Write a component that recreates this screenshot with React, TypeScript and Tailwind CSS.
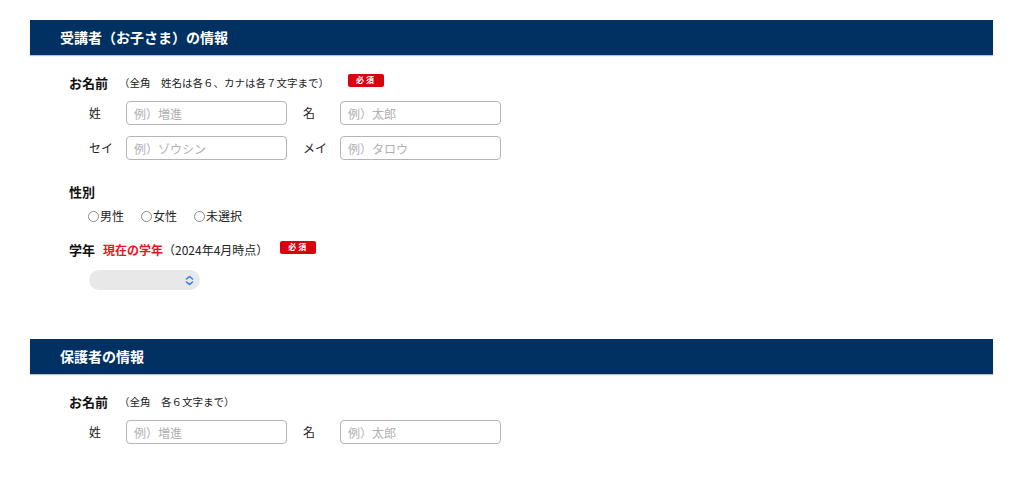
import React from "react";

const font = { fontFamily: '"Noto Sans CJK JP", "Noto Sans", sans-serif' };

function Required() {
  return (
    <span className="inline-flex h-[13px] w-[36px] -translate-y-[3px] items-center justify-center rounded-[2px] bg-[#d9000f] text-[8px] font-bold leading-none tracking-[2px] text-white">
      必須
    </span>
  );
}

function SectionHeader({ title }: { title: string }) {
  return (
    <h2 className="flex h-[35px] items-center bg-[#003162] pl-[30px] text-[14px] font-bold text-white shadow-[0_1px_1px_rgba(0,0,0,0.25)]">
      {title}
    </h2>
  );
}

function TextField({ placeholder }: { placeholder: string }) {
  return (
    <input
      type="text"
      placeholder={placeholder}
      className="h-[24px] w-[161px] rounded-[4px] border border-[#b5b5b5] bg-white px-[7px] text-[12px] text-[#333] placeholder-[#b0b0b0] outline-none"
    />
  );
}

function NameRow({
  left,
  right,
  leftPh,
  rightPh,
}: {
  left: string;
  right: string;
  leftPh: string;
  rightPh: string;
}) {
  return (
    <div className="flex h-[24px] items-center pl-[20px]">
      <span className="w-[37px] text-[12px] text-[#222]">{left}</span>
      <TextField placeholder={leftPh} />
      <span className="ml-[16px] w-[37px] text-[12px] text-[#222]">{right}</span>
      <TextField placeholder={rightPh} />
    </div>
  );
}

function Radio({ label }: { label: string }) {
  return (
    <label className="flex items-center text-[12px] text-[#222]">
      <span className="mr-[1px] inline-block h-[11px] w-[11px] rounded-full border border-[#8a8a8a] bg-white" />
      {label}
    </label>
  );
}

export default function App() {
  return (
    <div className="min-h-screen w-full bg-white pl-[30px] pr-[31px] pt-[20px]" style={font}>
      <section>
        <SectionHeader title="受講者（お子さま）の情報" />
        <div className="pl-[39px] pt-[20px]">
          <div className="flex h-[16px] items-center">
            <span className="text-[13px] font-bold text-[#111]">お名前</span>
            <span className="ml-[11px] text-[10.5px] text-[#222]">
              （全角　姓名は各６、カナは各７文字まで）
            </span>
            <span className="ml-[19px] flex">
              <Required />
            </span>
          </div>
          <div className="mt-[10px] flex flex-col gap-[11px]">
            <NameRow left="姓" right="名" leftPh="例）増進" rightPh="例）太郎" />
            <NameRow left="セイ" right="メイ" leftPh="例）ゾウシン" rightPh="例）タロウ" />
          </div>

          <div className="mt-[24px] flex h-[16px] items-center">
            <span className="text-[13px] font-bold text-[#111]">性別</span>
          </div>
          <div className="mt-[8px] flex h-[16px] items-center gap-[17px] pl-[19px]">
            <Radio label="男性" />
            <Radio label="女性" />
            <Radio label="未選択" />
          </div>

          <div className="mt-[18px] flex h-[16px] items-center">
            <span className="text-[13px] font-bold text-[#111]">学年</span>
            <span className="ml-[8px] text-[12px] font-bold text-[#e8141c]">現在の学年</span>
            <span className="text-[12px] text-[#222]">（2024年4月時点）</span>
            <span className="ml-[12px] flex">
              <Required />
            </span>
          </div>
          <div className="mt-[12px] pl-[20px]">
            <div className="flex h-[20px] w-[111px] items-center justify-end rounded-full bg-[#e8e8e8] pr-[6px]">
              <svg width="9" height="11" viewBox="0 0 9 11" fill="none">
                <path d="M1.5 4L4.5 1.5L7.5 4" stroke="#2f7cf6" strokeWidth="1.6" strokeLinecap="round" strokeLinejoin="round" />
                <path d="M1.5 7L4.5 9.5L7.5 7" stroke="#2f7cf6" strokeWidth="1.6" strokeLinecap="round" strokeLinejoin="round" />
              </svg>
            </div>
          </div>
        </div>
      </section>

      <section className="mt-[49px]">
        <SectionHeader title="保護者の情報" />
        <div className="pl-[39px] pt-[20px]">
          <div className="flex h-[16px] items-center">
            <span className="text-[13px] font-bold text-[#111]">お名前</span>
            <span className="ml-[11px] text-[10.5px] text-[#222]">（全角　各６文字まで）</span>
          </div>
          <div className="mt-[10px]">
            <NameRow left="姓" right="名" leftPh="例）増進" rightPh="例）太郎" />
          </div>
        </div>
      </section>
    </div>
  );
}
